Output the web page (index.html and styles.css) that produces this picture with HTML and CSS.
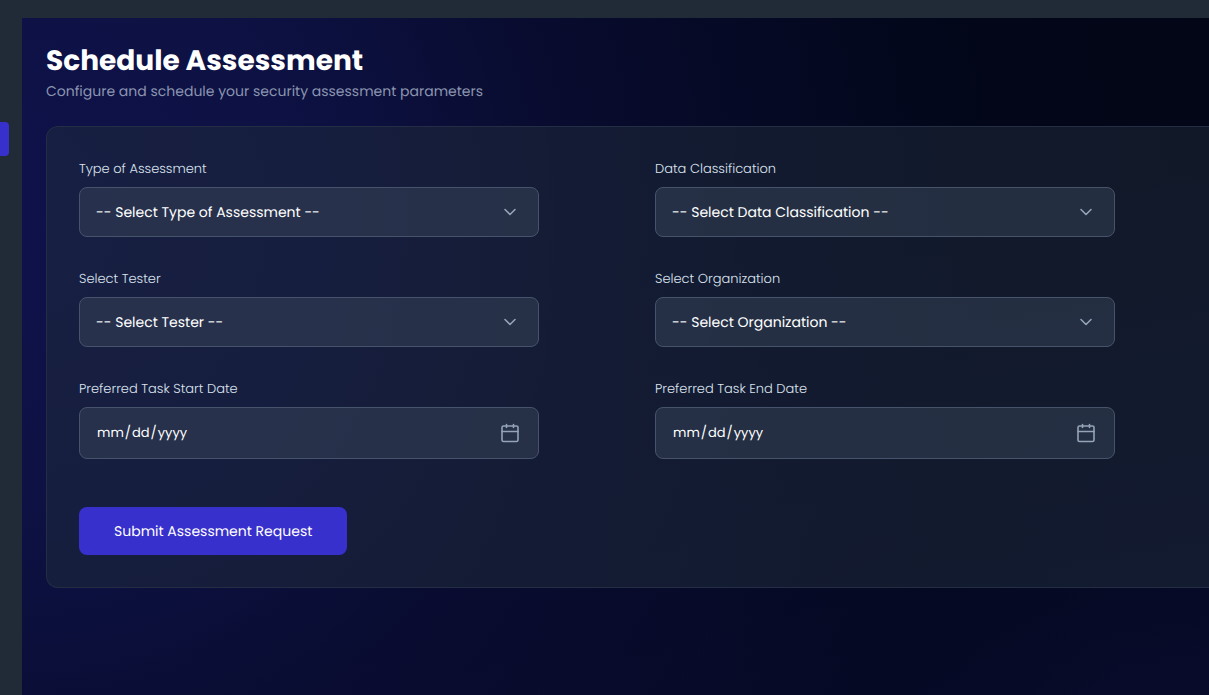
FILE: index.html
```html
<!DOCTYPE html>
<html lang="en-US">
<head>
<meta charset="utf-8">
<title>Schedule Assessment</title>
<link rel="stylesheet" href="styles.css">
</head>
<body>
<div class="app">
  <aside class="sidebar"><div class="nav-active"></div></aside>
  <main class="content">
    <header class="page-header">
      <h1 class="title">Schedule Assessment</h1>
      <p class="subtitle">Configure and schedule your security assessment parameters</p>
    </header>
    <form class="card">
      <div class="fields">
        <div class="field">
          <label class="label" for="type">Type of Assessment</label>
          <div class="control">
            <select class="input" id="type"><option>-- Select Type of Assessment --</option></select>
            <svg class="icon" viewBox="0 0 20 20"><path d="M5 7.500L10 12.500l5-5"/></svg>
          </div>
        </div>
        <div class="field">
          <label class="label" for="classification">Data Classification</label>
          <div class="control">
            <select class="input" id="classification"><option>-- Select Data Classification --</option></select>
            <svg class="icon" viewBox="0 0 20 20"><path d="M5 7.500L10 12.500l5-5"/></svg>
          </div>
        </div>
        <div class="field">
          <label class="label" for="tester">Select Tester</label>
          <div class="control">
            <select class="input" id="tester"><option>-- Select Tester --</option></select>
            <svg class="icon" viewBox="0 0 20 20"><path d="M5 7.500L10 12.500l5-5"/></svg>
          </div>
        </div>
        <div class="field">
          <label class="label" for="organization">Select Organization</label>
          <div class="control">
            <select class="input" id="organization"><option>-- Select Organization --</option></select>
            <svg class="icon" viewBox="0 0 20 20"><path d="M5 7.500L10 12.500l5-5"/></svg>
          </div>
        </div>
        <div class="field">
          <label class="label" for="start">Preferred Task Start Date</label>
          <div class="control">
            <input class="input date" type="date" id="start">
            <svg class="icon" viewBox="0 0 20 20"><rect x="2" y="3" width="16" height="15.500" rx="1.500"/><path d="M2 8.500h16M6.500 1.500v3M13.500 1.500v3"/></svg>
          </div>
        </div>
        <div class="field">
          <label class="label" for="end">Preferred Task End Date</label>
          <div class="control">
            <input class="input date" type="date" id="end">
            <svg class="icon" viewBox="0 0 20 20"><rect x="2" y="3" width="16" height="15.500" rx="1.500"/><path d="M2 8.500h16M6.500 1.500v3M13.500 1.500v3"/></svg>
          </div>
        </div>
      </div>
      <button class="submit" type="submit">Submit Assessment Request</button>
    </form>
  </main>
</div>
</body>
</html>
```
FILE: styles.css
```css
* { box-sizing: border-box; }
body {
  margin: 0;
  background: #212a37;
  font-family: Poppins, Inter, sans-serif;
  color: #fff;
  text-rendering: geometricPrecision;
}
.app {
  display: grid;
  grid-template-columns: 22px 1fr;
  min-height: 100vh;
  padding-top: 18px;
}
.sidebar { padding-top: 104px; }
.nav-active {
  width: 9px;
  height: 34px;
  border-radius: 0 4px 4px 0;
  background: #3730cc;
}
.content {
  padding: 24px 0 24px 24px;
  background:
    radial-gradient(ellipse 100% 180% at 0% 30%, #0f124a 0%, #0d1142 26%, rgba(10, 13, 52, 0.8) 46%, rgba(3, 7, 28, 0.3) 82%, rgba(2, 6, 23, 0) 100%),
    linear-gradient(170deg, #020617 40%, #080b2a 100%);
}
.page-header { margin-bottom: 24px; }
.title {
  margin: 0;
  font-size: 28px;
  line-height: 38px;
  font-weight: 700;
}
.subtitle {
  margin: 0;
  font-size: 14px;
  line-height: 22px;
  color: #8b95b0;
}
.card {
  padding: 32px 10px 32px 32px;
  border: 1px solid #232d43;
  border-right: 0;
  border-radius: 12px 0 0 12px;
  background: rgba(31, 43, 60, 0.5);
}
.fields {
  display: grid;
  grid-template-columns: 1fr 1fr;
  gap: 32px;
}
.field {
  display: flex;
  flex-direction: column;
  gap: 8px;
}
.label {
  font-size: 13px;
  font-weight: 300;
  line-height: 20px;
  color: #dbe3ee;
}
.control {
  position: relative;
  max-width: 460px;
}
.input {
  display: block;
  width: 100%;
  height: 50px;
  padding: 0 48px 0 16px;
  border: 1px solid #46536a;
  border-radius: 8px;
  background: rgba(55, 67, 87, 0.5);
  color: #fff;
  font-family: inherit;
  font-size: 14px;
  text-rendering: inherit;
  appearance: none;
}
.date {
  height: 52px;
  font-size: 13px;
}
.date::-webkit-calendar-picker-indicator { opacity: 0; }
.icon {
  position: absolute;
  top: 0;
  bottom: 0;
  right: 19px;
  width: 20px;
  height: 20px;
  margin: auto 0;
  fill: none;
  stroke: #94a3b8;
  stroke-width: 1.600;
  stroke-linecap: round;
  stroke-linejoin: round;
  pointer-events: none;
}
.submit {
  display: block;
  height: 48px;
  margin-top: 48px;
  padding: 0 35px;
  border: 0;
  border-radius: 8px;
  background: #3730cc;
  color: #fff;
  font-family: inherit;
  font-size: 14px;
  text-rendering: inherit;
}
```
